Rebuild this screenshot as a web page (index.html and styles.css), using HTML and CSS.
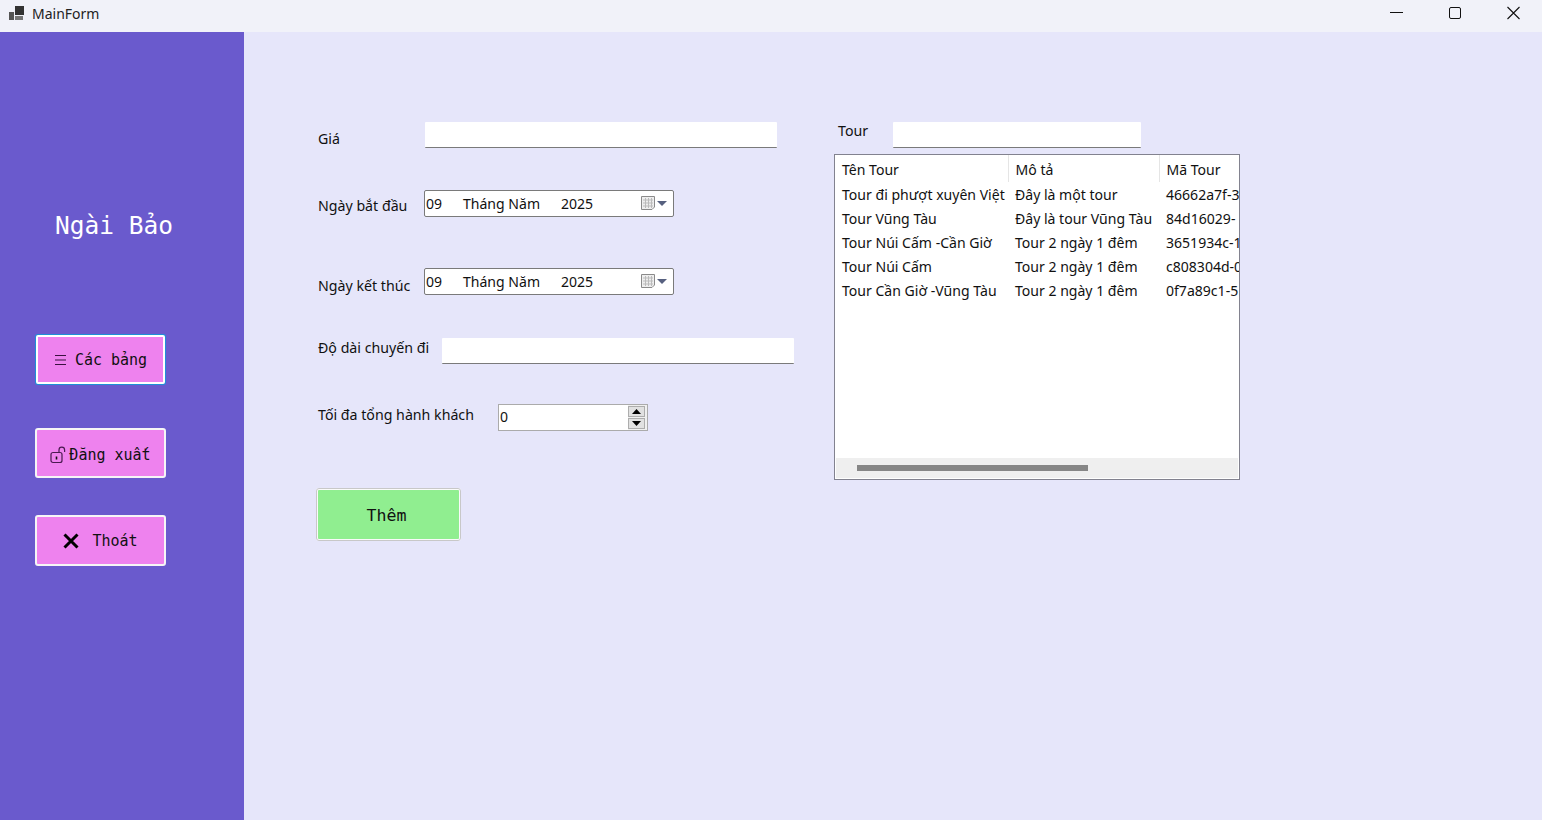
FILE: index.html
```html
<!DOCTYPE html>
<html lang="vi">
<head>
    <meta charset="UTF-8">
    <meta name="viewport" content="width=device-width, initial-scale=1.0">
    <title>MainForm</title>
    <link rel="stylesheet" href="styles.css">
</head>
<body>
    <header class="titlebar">
        <svg class="app-icon" width="16" height="16" viewBox="0 0 16 16">
            <rect x="0" y="6" width="5" height="8" fill="#555"/>
            <rect x="6" y="0" width="9" height="9" fill="#333"/>
            <rect x="6" y="10" width="8" height="4" fill="#777"/>
        </svg>
        <span class="app-name">MainForm</span>
        <div class="window-btns">
            <svg width="59" height="14" viewBox="0 0 59 14"><path d="M0 6.5H13" stroke="#111" stroke-width="1"/></svg>
            <svg width="58" height="14" viewBox="0 0 58 14"><rect x="0.5" y="1.5" width="11" height="11" rx="1.5" fill="none" stroke="#111" stroke-width="1"/></svg>
            <svg width="13" height="14" viewBox="0 0 13 14"><path d="M0.5 1L12.5 13M12.5 1L0.5 13" stroke="#111" stroke-width="1.1"/></svg>
        </div>
    </header>

    <div class="app">
        <aside class="sidebar">
            <h1 class="user-name">Ngài Bảo</h1>
            <button class="side-btn side-btn-active">
                <svg width="13" height="12" viewBox="0 0 13 12"><path d="M1 1.5H12M1 6H12M1 10.5H12" stroke="#3a1040" stroke-width="1.2"/></svg>
                <span>Các bảng</span>
            </button>
            <button class="side-btn side-btn-logout">
                <svg width="17" height="18" viewBox="0 0 17 18">
                    <rect x="1" y="6.5" width="11" height="10" rx="2" fill="none" stroke="#4a1a50" stroke-width="1.2"/>
                    <path d="M9 6.5V4a2.8 2.8 0 0 1 5.6 0V6" fill="none" stroke="#4a1a50" stroke-width="1.2"/>
                    <path d="M6.5 10.5V13.5" stroke="#111" stroke-width="1.6"/>
                </svg>
                <span>Đăng xuất</span>
            </button>
            <button class="side-btn side-btn-exit">
                <svg width="16" height="16" viewBox="0 0 16 16"><path d="M1.5 1.5L14.5 14.5M14.5 1.5L1.5 14.5" stroke="#000" stroke-width="3"/></svg>
                <span>Thoát</span>
            </button>
        </aside>

        <main class="content">
            <section class="form">
                <div class="row row-price">
                    <label class="label label-price">Giá</label>
                    <div class="textbox textbox-price"></div>
                </div>
                <div class="row row-start">
                    <label class="label label-start">Ngày bắt đầu</label>
                    <div class="datebox">
                        <span class="date-day">09</span>
                        <span class="date-month">Tháng Năm</span>
                        <span class="date-year">2025</span>
                        <svg class="date-icon" width="30" height="16" viewBox="0 0 30 16">
                            <path d="M0.5 1.5H13.5V12L11 14.5H0.5Z" fill="#eee" stroke="#8a8a8a"/>
                            <path d="M2 5H12M2 8H12M2 11H12M4.5 3V13M7.5 3V13M10.5 3V13" stroke="#bbb" stroke-width="1"/>
                            <path d="M16 6H26L21 11Z" fill="#56607f"/>
                        </svg>
                    </div>
                </div>
                <div class="row row-end">
                    <label class="label label-end">Ngày kết thúc</label>
                    <div class="datebox">
                        <span class="date-day">09</span>
                        <span class="date-month">Tháng Năm</span>
                        <span class="date-year">2025</span>
                        <svg class="date-icon" width="30" height="16" viewBox="0 0 30 16">
                            <path d="M0.5 1.5H13.5V12L11 14.5H0.5Z" fill="#eee" stroke="#8a8a8a"/>
                            <path d="M2 5H12M2 8H12M2 11H12M4.5 3V13M7.5 3V13M10.5 3V13" stroke="#bbb" stroke-width="1"/>
                            <path d="M16 6H26L21 11Z" fill="#56607f"/>
                        </svg>
                    </div>
                </div>
                <div class="row row-length">
                    <label class="label label-length">Độ dài chuyến đi</label>
                    <div class="textbox textbox-length"></div>
                </div>
                <div class="row row-max">
                    <label class="label label-max">Tối đa tổng hành khách</label>
                    <div class="numbox">
                        <span class="num-value">0</span>
                        <div class="spinner">
                            <span class="spin-btn"><svg width="9" height="5" viewBox="0 0 9 5"><path d="M0 5H9L4.5 0Z" fill="#000"/></svg></span>
                            <span class="spin-btn"><svg width="9" height="5" viewBox="0 0 9 5"><path d="M0 0H9L4.5 5Z" fill="#000"/></svg></span>
                        </div>
                    </div>
                </div>
                <button class="add-btn">Thêm</button>
            </section>

            <section class="tours">
                <div class="tour-search">
                    <label class="label label-tour">Tour</label>
                    <div class="textbox textbox-tour"></div>
                </div>
                <div class="listview">
                    <table class="tour-table">
                        <thead>
                            <tr><th class="col-name">Tên Tour</th><th class="col-desc">Mô tả</th><th class="col-id">Mã Tour</th></tr>
                        </thead>
                        <tbody>
                            <tr><td>Tour đi phượt xuyên Việt</td><td>Đây là một tour</td><td>46662a7f-3</td></tr>
                            <tr><td>Tour Vũng Tàu</td><td>Đây là tour Vũng Tàu</td><td>84d16029-</td></tr>
                            <tr><td>Tour Núi Cấm -Cần Giờ</td><td>Tour 2 ngày 1 đêm</td><td>3651934c-1</td></tr>
                            <tr><td>Tour Núi Cấm</td><td>Tour 2 ngày 1 đêm</td><td>c808304d-0</td></tr>
                            <tr><td>Tour Cần Giờ -Vũng Tàu</td><td>Tour 2 ngày 1 đêm</td><td>0f7a89c1-5</td></tr>
                        </tbody>
                    </table>
                    <div class="hscroll"><div class="hscroll-thumb"></div></div>
                </div>
            </section>
        </main>
    </div>
</body>
</html>
```

FILE: styles.css
```css
/* Estructura general */
* {
    box-sizing: border-box;
}

html, body {
    height: 100%;
}

body {
    margin: 0;
    display: flex;
    flex-direction: column;
    overflow: hidden;
    background: #e6e6fa;
    color: #111;
    font-family: "Noto Sans", "Open Sans", sans-serif;
    font-size: 14.05px;
}

/* Barra de titulo */
.titlebar {
    height: 32px;
    flex-shrink: 0;
    display: flex;
    align-items: center;
    padding-left: 9px;
    padding-right: 22px;
    background: #f1f2f9;
}

.app-icon {
    margin-top: -4px;
}

.app-name {
    margin-left: 7px;
    margin-top: -5px;
    font-size: 14px;
    color: #222;
}

.window-btns {
    margin-left: auto;
    margin-top: -6px;
    display: flex;
    align-items: center;
}

/* Barra lateral */
.app {
    flex: 1;
    display: flex;
}

.sidebar {
    width: 244px;
    flex-shrink: 0;
    padding-top: 178px;
    padding-left: 35px;
    background: #6a5acd;
}

.user-name {
    margin: 0 0 94px 20px;
    height: 31px;
    line-height: 31px;
    font-family: "DejaVu Sans Mono", monospace;
    font-size: 24.5px;
    font-weight: normal;
    color: #fff;
}

.side-btn {
    width: 131px;
    height: 50px;
    display: flex;
    align-items: center;
    justify-content: center;
    padding: 1px 0 0;
    background: #ee82ee;
    border: 2px solid #f6f6f6;
    border-radius: 3px;
    font-family: "DejaVu Sans Mono", monospace;
    font-size: 15px;
    color: #111;
}

.side-btn-active {
    width: 129px;
    height: 49px;
    margin-left: 1px;
    margin-bottom: 44px;
    gap: 8px;
    border-color: #fff;
    border-radius: 2px;
    box-shadow: 0 0 0 1px #1e90d8;
}

.side-btn-logout {
    gap: 2px;
    margin-bottom: 37px;
    padding-top: 3px;
}

.side-btn-exit {
    height: 51px;
    gap: 13px;
}

/* Formulario */
.content {
    flex: 1;
    display: flex;
    align-items: flex-start;
    padding-left: 72px;
}

.form {
    width: 518px;
    padding-top: 90px;
    flex-shrink: 0;
}

.row {
    display: flex;
    align-items: flex-start;
    height: 27px;
}

.row-price,
.row-length {
    height: 26px;
}

.row-start {
    margin-top: 42px;
}

.row-end {
    margin-top: 51px;
}

.row-length {
    margin-top: 43px;
}

.row-max {
    margin-top: 40px;
}

.label {
    display: block;
    padding-left: 2px;
    white-space: nowrap;
    line-height: 20px;
    font-size: 14.2px;
}

.label-price {
    width: 109px;
    padding-top: 7px;
}

.label-start {
    width: 108px;
    padding-top: 6px;
}

.label-end {
    width: 108px;
    padding-top: 8px;
}

.label-length {
    width: 126px;
}

.label-max {
    width: 182px;
    padding-top: 1px;
}

.textbox {
    height: 26px;
    background: #fff;
    border-bottom: 1px solid #7a7a7a;
    border-radius: 1px;
}

.textbox-price,
.textbox-length {
    width: 352px;
}

.textbox-tour {
    width: 248px;
}

.datebox {
    width: 250px;
    height: 27px;
    display: flex;
    align-items: center;
    padding-left: 1px;
    padding-bottom: 1px;
    background: #fff;
    border: 1px solid #7a7a7a;
    border-radius: 2px;
}

.date-day {
    width: 37px;
}

.date-month {
    width: 98px;
}

.date-year {
    width: 80px;
}

.date-icon {
    flex-shrink: 0;
}

.numbox {
    width: 150px;
    height: 27px;
    display: flex;
    align-items: center;
    padding-left: 1px;
    background: #fff;
    border: 1px solid #ababab;
}

.num-value {
    flex: 1;
    padding-bottom: 2px;
}

.spinner {
    width: 19px;
    height: 25px;
    display: flex;
    flex-direction: column;
    justify-content: center;
    gap: 1px;
    background: #f0f0f0;
}

.spin-btn {
    width: 17px;
    height: 11px;
    display: flex;
    align-items: center;
    justify-content: center;
    background: #e1e1e1;
    border: 1px solid #adadad;
}

.add-btn {
    width: 145px;
    height: 53px;
    display: block;
    margin-top: 57px;
    padding: 1px 4px 0 0;
    background: #90ee90;
    border: 2px solid #fafafa;
    outline: 1px solid #c8c8c8;
    outline-offset: -1px;
    border-radius: 3px;
    font-family: "DejaVu Sans Mono", monospace;
    font-size: 16.6px;
    color: #111;
}

/* Lista de tours */
.tours {
    width: 406px;
    padding-top: 90px;
}

.tour-search {
    display: flex;
    align-items: flex-start;
}

.label-tour {
    width: 59px;
    margin-top: -1px;
    padding-left: 4px;
}

.listview {
    height: 326px;
    margin-top: 6px;
    display: flex;
    flex-direction: column;
    background: #fff;
    border: 1px solid #82828f;
    overflow: hidden;
}

.tour-table {
    flex-shrink: 0;
    width: 404px;
    table-layout: fixed;
    border-collapse: collapse;
}

.tour-table th,
.tour-table td {
    height: 24px;
    padding: 0 0 0 7px;
    text-align: left;
    font-weight: normal;
    white-space: nowrap;
    overflow: hidden;
}

.tour-table th {
    height: 27px;
    padding-top: 2px;
    border-right: 1px solid #e5e5e5;
}

.tour-table th.col-id {
    border-right: none;
}

.col-name {
    width: 173px;
}

.col-desc {
    width: 151px;
}

.hscroll {
    height: 20px;
    margin: auto 1px 1px;
    padding: 7px 0 0 21px;
    background: #efefef;
}

.hscroll-thumb {
    width: 231px;
    height: 6px;
    background: #868686;
}
```
